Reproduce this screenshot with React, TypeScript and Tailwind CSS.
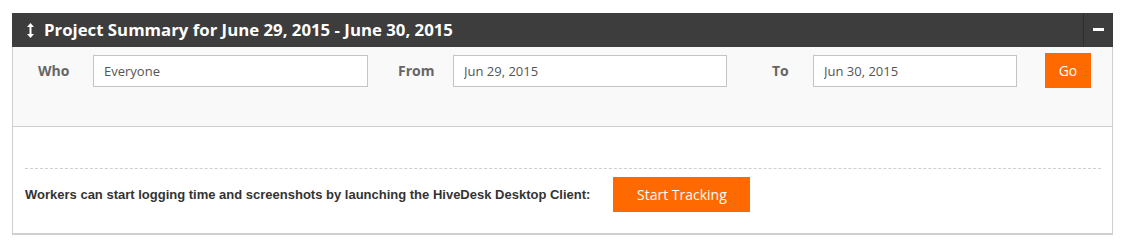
import React from "react";

export default function App() {
  return (
    <div className="w-[1125px] h-[246px] bg-white pt-[13px] pl-[12px]" style={{ fontFamily: '"Open Sans", sans-serif' }}>
      <div className="w-[1101px]">
        {/* Header */}
        <div className="h-[34px] bg-[#3d3d3d] flex items-center text-white">
          <div className="w-[32px] flex justify-center pl-[4px]">
            <svg width="7" height="15" viewBox="0 0 7 15">
              <path d="M3.5 0 L7 4 L4.5 4 L4.5 11 L7 11 L3.5 15 L0 11 L2.5 11 L2.5 4 L0 4 Z" fill="#ffffff" />
            </svg>
          </div>
          <div className="flex-1 text-[16.8px] font-bold leading-none">
            Project Summary for June 29, 2015 - June 30, 2015
          </div>
          <div className="w-[30px] h-full border-l border-[#2e2e2e] flex items-center justify-center">
            <div className="w-[11px] h-[3px] bg-white mt-[-1px]" />
          </div>
        </div>
        {/* Filters */}
        <div className="h-[80px] bg-[#f9f9f9] border-l border-r border-b border-[#cfcfcf] pt-[7px]">
          <div className="flex items-center h-[33px] text-[14px]">
            <label className="ml-[25px] w-[30px] font-bold text-[#666]">Who</label>
            <input
              readOnly
              value="Everyone"
              className="ml-[25px] w-[275px] h-[32px] bg-white border border-[#c4c4c4] px-[10px] text-[13px] text-[#555] outline-none"
            />
            <label className="ml-[30px] w-[35px] font-bold text-[#666]">From</label>
            <input
              readOnly
              value="Jun 29, 2015"
              className="ml-[20px] w-[274px] h-[32px] bg-white border border-[#c4c4c4] px-[10px] text-[13px] text-[#555] outline-none"
            />
            <label className="ml-[45px] w-[17px] font-bold text-[#666]">To</label>
            <input
              readOnly
              value="Jun 30, 2015"
              className="ml-[24px] w-[204px] h-[32px] bg-white border border-[#c4c4c4] px-[10px] text-[13px] text-[#555] outline-none"
            />
            <button className="ml-[28px] w-[46px] h-[35px] bg-[#ff6a00] text-white text-[14px] mt-[-1px]">
              Go
            </button>
          </div>
        </div>
        {/* Content */}
        <div className="h-[108px] bg-white border-l border-r border-[#cfcfcf] border-b-2 border-b-[#cfcfcf] px-[12px] pt-[41px]">
          <div className="border-t border-dashed border-[#cfcfcf] w-[1076px]" />
          <div className="flex items-center mt-[8px]">
            <span
              className="text-[13px] font-bold text-[#333]"
              style={{ fontFamily: '"Liberation Sans", Arial, sans-serif' }}
            >
              Workers can start logging time and screenshots by launching the HiveDesk Desktop Client:
            </span>
            <button className="ml-[23px] w-[137px] h-[35px] bg-[#ff6a00] text-white text-[14px]">
              Start Tracking
            </button>
          </div>
        </div>
      </div>
    </div>
  );
}
